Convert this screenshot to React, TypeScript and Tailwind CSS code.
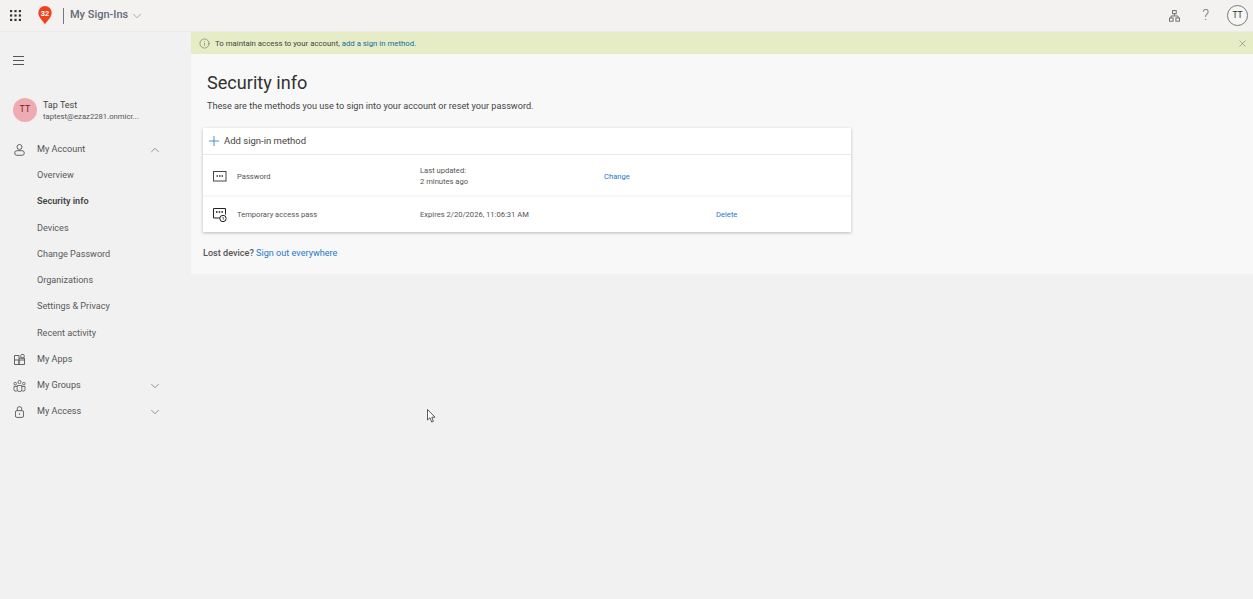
import { ChevronDown, ChevronUp, Info, Plus, X } from 'lucide-react';

const FONT = "font-['Roboto','Open_Sans',sans-serif]";

function WaffleIcon() {
    const dots = [];
    for (let y = 0; y < 3; y++) {
        for (let x = 0; x < 3; x++) {
            dots.push(<rect key={`${x}-${y}`} x={x * 4} y={y * 4} width="2" height="2" fill="#333" />);
        }
    }
    return <svg width="11" height="11" viewBox="0 0 10 10">{dots}</svg>;
}

function BraveBadge() {
    return (
        <svg width="14" height="19" viewBox="0 0 14 19">
            <path d="M7 18.5 C5.5 15.5 0.3 11.5 0.3 6.8 A6.7 6.7 0 0 1 13.7 6.8 C13.7 11.5 8.5 15.5 7 18.5 Z" fill="#f0421c" />
            <text x="7" y="9.5" textAnchor="middle" fontSize="7.5" fontWeight="700" fill="#fff" fontFamily="Liberation Sans">32</text>
        </svg>
    );
}

function MenuIcon() {
    return (
        <svg width="11" height="9" viewBox="0 0 11 9" fill="#555">
            <rect x="0" y="0" width="11" height="1" />
            <rect x="0" y="4" width="11" height="1" />
            <rect x="0" y="8" width="11" height="1" />
        </svg>
    );
}

function PersonIcon() {
    return (
        <svg width="11" height="12" viewBox="0 0 11 12" fill="none" stroke="#555" strokeWidth="0.9">
            <circle cx="5.5" cy="3" r="2.5" />
            <path d="M3 6.7 H8 A2.3 2.3 0 0 1 10.3 9 A2.3 2.3 0 0 1 8 11.3 H3 A2.3 2.3 0 0 1 0.7 9 A2.3 2.3 0 0 1 3 6.7 Z" />
        </svg>
    );
}

function AppsIcon() {
    return (
        <svg width="11" height="11" viewBox="0 0 11 11" fill="none" stroke="#555" strokeWidth="0.9">
            <path d="M0.5 1.5 H5 V10.5 H0.5 Z M0.5 6 H10.5 M5 6 V10.5 H10.5 V4.2 H5" />
            <rect x="6.8" y="0.5" width="3.4" height="3.4" rx="1" />
        </svg>
    );
}

function GroupsIcon() {
    return (
        <svg width="13" height="12" viewBox="0 0 14 13" fill="none" stroke="#555" strokeWidth="0.9">
            <circle cx="7" cy="2.2" r="1.7" />
            <circle cx="2.3" cy="4" r="1.4" />
            <circle cx="11.7" cy="4" r="1.4" />
            <path d="M4.5 6 H9.5 V10.5 A2 2 0 0 1 7.5 12.5 H6.5 A2 2 0 0 1 4.5 10.5 Z" />
            <path d="M4.5 7 H1 V9.5 A2 2 0 0 0 4.7 11" />
            <path d="M9.5 7 H13 V9.5 A2 2 0 0 1 9.3 11" />
        </svg>
    );
}

function LockIcon() {
    return (
        <svg width="9" height="12" viewBox="0 0 10 13" fill="none" stroke="#555" strokeWidth="1">
            <path d="M2.5 5 V3 A2.5 2.5 0 0 1 7.5 3 V5" />
            <rect x="0.5" y="5" width="9" height="7.5" rx="1.5" />
            <circle cx="5" cy="8.7" r="0.8" fill="#555" stroke="none" />
        </svg>
    );
}

function PasswordIcon() {
    return (
        <svg width="14" height="11" viewBox="0 0 14 11" fill="none">
            <rect x="0.5" y="0.5" width="12.5" height="9.5" stroke="#444" />
            <path d="M3.5 5 H5 M6 5 H7.5 M8.5 5 H10" stroke="#333" strokeWidth="1.4" />
        </svg>
    );
}

function TemporaryPassIcon() {
    return (
        <svg width="14" height="15" viewBox="0 0 14 15" fill="none">
            <path d="M7 10 H0.5 V0.5 H12.5 V6.5" stroke="#222" />
            <path d="M3 4 H4.5 M5.7 4 H7.2 M8.4 4 H9.9" stroke="#111" strokeWidth="1.4" />
            <circle cx="10" cy="10.5" r="3.2" stroke="#222" />
            <path d="M10 8.8 V10.6 L11.2 11.6" stroke="#222" strokeWidth="0.8" />
        </svg>
    );
}

function OrgIcon() {
    return (
        <svg width="11" height="12" viewBox="0 0 11 12" fill="none" stroke="#666" strokeWidth="0.9">
            <rect x="3.6" y="0.5" width="3.6" height="3.2" />
            <path d="M5.4 3.7 V6 M2 8 V6 H9 V8" />
            <rect x="0.5" y="8" width="3.6" height="3.2" />
            <rect x="6.9" y="8" width="3.6" height="3.2" />
        </svg>
    );
}

function Cursor() {
    return (
        <svg className="absolute left-[427px] top-[409px]" width="9" height="14" viewBox="0 0 9 14">
            <path d="M0.5 0.5 V11 L3 8.7 L4.7 13 L6.4 12.3 L4.8 8.2 H8 Z" fill="#fff" stroke="#333" strokeWidth="0.8" />
        </svg>
    );
}

const subItems = ['Overview', 'Security info', 'Devices', 'Change Password', 'Organizations', 'Settings & Privacy', 'Recent activity'];

function NavRow({ icon, label, chevron }: { icon: React.ReactNode; label: string; chevron?: 'up' | 'down' }) {
    return (
        <div className="flex h-[26.25px] items-center text-[9.1px] text-[#555]">
            <div className="flex w-[37px] shrink-0 justify-center pl-[2px]">{icon}</div>
            <span className="flex-1">{label}</span>
            {chevron === 'up' && <ChevronUp size={14} strokeWidth={1} className="mr-[29px] text-[#555]" />}
            {chevron === 'down' && <ChevronDown size={14} strokeWidth={1} className="mr-[29px] text-[#555]" />}
        </div>
    );
}

function Sidebar() {
    return (
        <aside className="flex w-[191px] shrink-0 flex-col">
            <div className="flex h-[29px] items-center pl-[13px] pt-[28px]">
                <MenuIcon />
            </div>
            <div className="mt-[37px] flex items-center pl-[13px]">
                <div className="flex h-[24px] w-[24px] items-center justify-center rounded-full bg-[#eeacb2] text-[9px] text-[#7a1a24]">TT</div>
                <div className="ml-[6px] pt-[2px] leading-[11px]">
                    <div className="text-[9px] text-[#444]">Tap Test</div>
                    <div className="text-[7.7px] text-[#555]">taptest@ezaz2281.onmicr...</div>
                </div>
            </div>
            <div className="mt-[14.6px]">
                <NavRow icon={<PersonIcon />} label="My Account" chevron="up" />
                {subItems.map(item => (
                    <div
                        key={item}
                        className={`flex h-[26.25px] items-center pl-[37px] text-[9.1px] ${item === 'Security info' ? 'font-semibold text-[#444]' : 'text-[#5a5a5a]'}`}
                    >
                        {item}
                    </div>
                ))}
                <NavRow icon={<AppsIcon />} label="My Apps" />
                <NavRow icon={<GroupsIcon />} label="My Groups" chevron="down" />
                <NavRow icon={<LockIcon />} label="My Access" chevron="down" />
            </div>
        </aside>
    );
}

export default function App() {
    return (
        <div className={`relative flex h-[599px] w-[1253px] flex-col overflow-hidden bg-[#f1f1f1] ${FONT}`}>
            <header className="flex h-[32px] shrink-0 items-center border-b border-[#ebebeb] bg-[#f3f2f1]">
                <div className="ml-[10px] flex"><WaffleIcon /></div>
                <div className="ml-[17px] flex"><BraveBadge /></div>
                <div className="ml-[11px] h-[16px] w-px bg-[#777]" />
                <span className="ml-[6px] text-[11px] font-medium text-[#646b76]">My Sign-Ins</span>
                <ChevronDown size={14} strokeWidth={1} className="ml-[2px] text-[#777]" />
                <div className="ml-auto flex items-center">
                    <OrgIcon />
                    <span className="ml-[22px] text-[15px] font-light leading-none text-[#777]">?</span>
                    <div className="ml-[18px] mr-[5px] flex h-[21px] w-[21px] items-center justify-center rounded-full border border-[#777] bg-[#f6f6f6] text-[8.5px] text-[#333]">TT</div>
                </div>
            </header>
            <div className="flex flex-1">
                <Sidebar />
                <main className="flex-1">
                    <div className="flex h-[22px] items-center bg-[#e6edc6] pl-[8px] pr-[5px] text-[7.8px] text-[#444]">
                        <Info size={11} strokeWidth={1} className="text-[#444]" />
                        <span className="ml-[5px] pt-px">To maintain access to your account, <span className="text-[#106e9e]">add a sign in method.</span></span>
                        <X size={11} strokeWidth={1} className="ml-auto text-[#555]" />
                    </div>
                    <div className="h-[220px] bg-[#f8f8f8] pl-[12px]">
                        <h1 className="pl-[4px] pt-[17px] text-[18.1px] leading-[24px] text-[#323130]">Security info</h1>
                        <p className="mt-[5px] pl-[4px] text-[9.15px] leading-[12px] text-[#444]">These are the methods you use to sign into your account or reset your password.</p>
                        <section className="mt-[16px] w-[648px] bg-white shadow-[0_1px_3px_rgba(0,0,0,0.25)]">
                            <div className="flex h-[27px] items-center border-b border-[#e8e8e8] pl-[3px] text-[9.5px] text-[#444]">
                                <Plus size={16} strokeWidth={1.1} className="text-[#106ebe]" />
                                <span className="ml-[2px]">Add sign-in method</span>
                            </div>
                            <div className="flex h-[42px] items-center border-b-2 border-[#f6f6f6] pt-[3px] text-[7.6px] text-[#555]">
                                <div className="flex w-[34px] shrink-0 justify-center"><PasswordIcon /></div>
                                <span className="w-[183px]">Password</span>
                                <div className="w-[184px] leading-[10.5px]">
                                    <div>Last updated:</div>
                                    <div>2 minutes ago</div>
                                </div>
                                <span className="text-[#1f78c9]">Change</span>
                            </div>
                            <div className="flex h-[35px] items-center pt-px text-[7.6px] text-[#555]">
                                <div className="flex w-[34px] shrink-0 justify-center"><TemporaryPassIcon /></div>
                                <span className="w-[183px]">Temporary access pass</span>
                                <span className="w-[296px]">Expires 2/20/2026, 11:06:31 AM</span>
                                <span className="text-[#1f78c9]">Delete</span>
                            </div>
                        </section>
                        <p className="mt-[15px] text-[9.1px] leading-[12px] text-[#555]">
                            <span className="font-medium">Lost device? </span>
                            <span className="text-[#1f78c9]">Sign out everywhere</span>
                        </p>
                    </div>
                </main>
            </div>
            <Cursor />
        </div>
    );
}
